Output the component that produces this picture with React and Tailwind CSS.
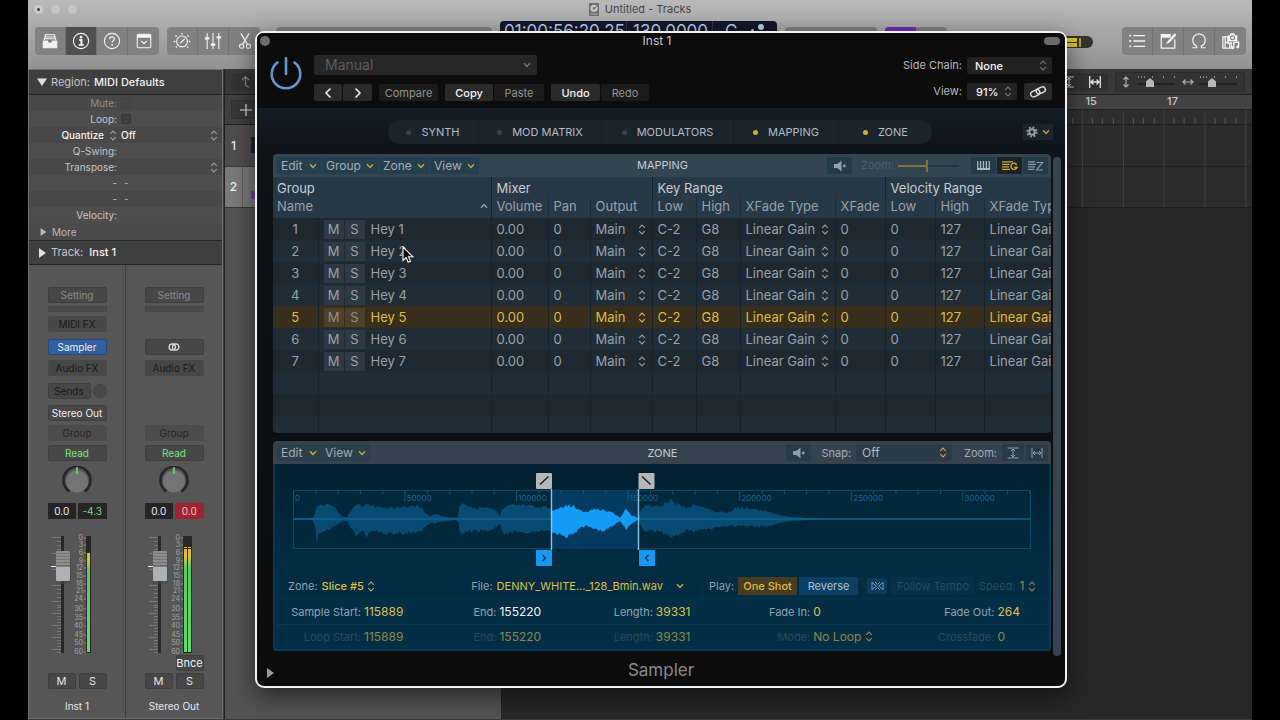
import React from "react";

/* ---------- small icons ---------- */

function UpDown({ className = "" }) {
  return (
    <svg aria-hidden="true" viewBox="0 0 8 12" className={"pointer-events-none w-2 shrink-0 " + className} height="11" fill="none" stroke="currentColor" strokeWidth="1.2">
      <path d="M1 4.2 4 1.2l3 3M1 7.8l3 3 3-3" />
    </svg>
  );
}

function Chevron({ className = "" }) {
  return (
    <svg aria-hidden="true" viewBox="0 0 8 6" className={"pointer-events-none h-1.5 w-2 shrink-0 " + className} fill="none" stroke="currentColor" strokeWidth="1.4">
      <path d="M1 1.2 4 4.4l3-3.2" />
    </svg>
  );
}

function Speaker() {
  return (
    <svg aria-hidden="true" viewBox="0 0 14 12" className="h-3 w-3.5" fill="#93a0ab">
      <path d="M1 4h3.2L8.5.8v10.4L4.200 8H1z" />
      <circle cx="11.300" cy="6" r="1.400" />
    </svg>
  );
}

function Triangle({ down = false, className = "" }) {
  return (
    <svg aria-hidden="true" viewBox="0 0 10 10" className={"size-2.5 shrink-0 " + className} fill="currentColor">
      <path d={down ? "M0 1.500h10L5 9z" : "M2 0l7 5-7 5z"} />
    </svg>
  );
}

/* ---------- main toolbar ---------- */

function ToolButton({ label, active = false, children }) {
  return (
    <button
      type="button"
      aria-label={label}
      className={
        "flex h-7 w-[31px] items-center justify-center border-r border-[#727272] last:border-r-0 " +
        (active ? "bg-[#505050]" : "bg-[#818181]")
      }
    >
      <svg viewBox="0 0 20 20" className="size-[18px]" fill="none" stroke="#f4f4f4" strokeWidth="1.200">
        {children}
      </svg>
    </button>
  );
}

function Toolbar() {
  return (
    <header className="flex h-[69px] flex-col bg-linear-to-b from-[#b9b9b9] to-[#929292]">
      <div className="relative flex h-[18px] items-center justify-center gap-1.5 text-[11px] text-[#484848]">
        <div className="absolute left-[6px] flex gap-[8px]">
          <span className="flex size-[9px] items-center justify-center rounded-full bg-[#cdcdcd]">
            <span className="size-[3px] rounded-full bg-[#3d3d3d]" />
          </span>
          <span className="size-[9px] rounded-full bg-[#c6c6c6]" />
          <span className="size-[9px] rounded-full bg-[#c6c6c6]" />
        </div>
        <svg aria-hidden="true" viewBox="0 0 10 13" className="h-[13px] w-2.5">
          <rect width="10" height="13" rx="1" fill="#6d6d6d" />
          <circle cx="5" cy="5.300" r="3.600" fill="#c9c9c9" />
          <circle cx="5" cy="5.300" r="1.200" fill="#6d6d6d" />
          <path d="M5 5.300 8 3" stroke="#6d6d6d" />
          <path d="M1.500 11h7" stroke="#b5b5b5" />
        </svg>
        <h1>Untitled - Tracks</h1>
      </div>
      <div className="flex items-start pt-[9px] pr-[6px] pl-[7px]">
        <div className="flex overflow-hidden rounded-sm">
          <ToolButton label="Library">
            <path d="M3.500 9 5 3h10l1.500 6M4.500 5.500h11M4 7.500h12" />
            <path d="M2.500 10h4.500c0 3.500 6 3.500 6 0h4.500v7.500h-15z" fill="#f4f4f4" />
          </ToolButton>
          <ToolButton label="Inspector" active>
            <circle cx="10" cy="10" r="8.500" />
            <circle cx="10" cy="5.800" r="1.500" fill="#f4f4f4" stroke="none" />
            <path d="M8 8.800h2.500V14M7.500 14.300h5.500" strokeWidth="2.200" />
          </ToolButton>
          <ToolButton label="Quick Help">
            <circle cx="10" cy="10" r="8.500" />
            <path d="M7.400 8c0-3.600 5.200-3.400 5.200-.3 0 1.900-2.500 2-2.500 4.100" strokeWidth="1.400" />
            <circle cx="10.100" cy="14.400" r="1" fill="#f4f4f4" stroke="none" />
          </ToolButton>
          <ToolButton label="Toolbar">
            <rect x="2.500" y="2.500" width="15" height="15" rx="1.500" />
            <path d="M2.500 4.500h15" strokeWidth="3.500" />
            <path d="m7 10 3 3 3-3" />
          </ToolButton>
        </div>
        <div className="ml-2 flex overflow-hidden rounded-sm">
          <ToolButton label="Smart Controls">
            <circle cx="10" cy="10.500" r="6" />
            <path d="m13 7.500-5 5" />
            <path d="M10 1v1.800M2.800 3.800 4 5M17.200 3.800 16 5M.8 10.500h1.800M17.400 10.500h1.800M3.200 17.200l1-1M16.800 17.200l-1-1" strokeWidth="1.500" />
          </ToolButton>
          <ToolButton label="Mixer">
            <path d="M3.500 1v18M10 1v18M16.500 1v18" />
            <path d="M1 7h5M7.500 14h5M14 6h5" strokeWidth="2.400" />
          </ToolButton>
          <ToolButton label="Editors">
            <path d="M5.500 1.500 12.500 13.500M14.500 1.500 7.500 13.500" strokeWidth="1.500" />
            <circle cx="6.200" cy="15.800" r="2.300" />
            <circle cx="13.800" cy="15.800" r="2.300" />
          </ToolButton>
        </div>
        <div className="ml-4 h-7 flex-1 rounded-sm bg-[#818181]" />
        <div className="ml-2 flex h-9 w-[277px] shrink-0 -translate-y-1.5 rounded-t-sm bg-[#12172a] pl-1 text-[17px] leading-5 text-[#b9cbe6]">
          <span className="w-[123px] border-r border-[#2c3347]">01:00:56:20.25</span>
          <span className="w-[86px] border-r border-[#2c3347] pl-1.5">130.0000</span>
          <span className="flex flex-1 gap-3.5 pl-3">
            C
            <span className="flex items-start gap-1 pt-[3px]">
              <span className="mt-[5px] size-[3px] rounded-full bg-[#b9cbe6]" />
              <span className="size-1.5 rounded-full bg-[#b9cbe6]" />
            </span>
          </span>
        </div>
        <div className="ml-2 h-7 w-[92px] shrink-0 rounded-sm bg-[#818181]" />
        <div className="ml-2 flex h-7 w-[62px] shrink-0 overflow-hidden rounded-sm bg-[#818181]">
          <span className="w-[31px] bg-[#6a2fb8]" />
        </div>
        <div className="mt-[9px] ml-[16px] flex h-3 w-[130px] shrink-0 items-center justify-end rounded-full bg-[#35342c] pr-3">
          <svg aria-hidden="true" viewBox="0 0 110 9" className="h-[9px] w-[110px]">
            <path d="M0 0h106v4H0zM0 5h106v4H0z" fill="#e0c622" />
            <path d="M109 0v9" stroke="#e0c622" strokeWidth="1.500" />
          </svg>
        </div>
        <div className="ml-[29px] flex overflow-hidden rounded-sm">
          <ToolButton label="List Editors">
            <path d="M6 4h13M6 10h13M6 16h13" strokeWidth="1.400" />
            <path d="M1.500 4h2M1.500 10h2M1.500 16h2" strokeWidth="2" />
          </ToolButton>
          <ToolButton label="Notes">
            <path d="M17.500 8v10h-15V3h10.500" strokeWidth="1.400" />
            <path d="M2.500 4.500h10.500" strokeWidth="3.500" />
            <path d="M17.500 1.800 10 10l-1.500 3L11.500 11.500 19 3.500z" fill="#f4f4f4" strokeWidth=".6" />
          </ToolButton>
          <ToolButton label="Apple Loops">
            <path d="M2.500 17.500h5v-1.800a7 7 0 1 1 5 0v1.800h5" strokeWidth="1.300" />
          </ToolButton>
          <ToolButton label="Browsers">
            <path d="M6.500 3.500h2L9.500 1.500h4l1 2h2.500v7h-10.500z" fill="#f4f4f4" stroke="none" />
            <circle cx="11.700" cy="6.500" r="2.200" stroke="#818181" />
            <path d="M1 5.500v12.500h9.500v-5.500h-4v-7zM3.500 5.500v12.500M8.500 12.500v5.500M3.500 11.500h3" strokeWidth="1.400" />
            <path d="M13 17.500v-5.500l5.500-1V16" strokeWidth="1.400" />
            <circle cx="12" cy="17.500" r="1.700" fill="#f4f4f4" stroke="none" />
            <circle cx="17.500" cy="16.500" r="1.700" fill="#f4f4f4" stroke="none" />
          </ToolButton>
        </div>
      </div>
    </header>
  );
}

/* ---------- inspector ---------- */

function RegionRow({ label, tone = "text-[#c4c4c4]", children }) {
  return (
    <div className="flex h-4 items-center odd:bg-[#484848] even:bg-[#4d4d4d]">
      <span className={"w-[88px] shrink-0 text-right " + tone}>{label}</span>
      <span className="flex flex-1 items-center justify-between pr-1 pl-1">{children}</span>
    </div>
  );
}

const SCALE = [
  [0, 3], [3, 10], [6, 18], [9, 26], [12, 33], [15, 41], [18, 49], [21, 56],
  [24, 64], [30, 74], [35, 83], [40, 91], [45, 100], [50, 108], [60, 117],
];

function Fader({ stereo = false, name }) {
  const gradient = stereo ? "level-stereo" : "level-mono";
  const ticks = [];
  for (let i = 0; i < 34; i++) ticks.push(i < 18 ? 2 + i * 4 : 72 + (i - 18) * 3);
  return (
    <div className="relative h-[120px] w-[59px]">
      <svg aria-hidden="true" viewBox="0 0 59 120" className="h-[120px] w-[59px] overflow-visible">
        <path
          d={ticks.filter((y) => y < 118).map((y, i) => `M${i % 4 === 0 ? 4 : 9} ${y}.5H14`).join("")}
          stroke="#858585"
          strokeWidth=".7"
        />
        <path d="M3 31.500h8" stroke="#ececec" />
        <rect x="13" y="1" width="3" height="117" fill="#282828" />
        <rect x="8" y="17" width="15" height="32" rx="1" fill="#474747" opacity=".6" />
        <rect x="8" y="16" width="14" height="15" rx="1" fill="#8d8d8d" />
        <rect x="8" y="31" width="14" height="15" rx="1" fill="#b0b1b5" />
        <path d="M8 18.500h14M8 21.500h14M8 24.500h14M8 27.500h14" stroke="#747474" />
        <path d="M8 31h14" stroke="#4b4b4b" />
        <g fill="#a3a3a3" fontSize="7" fontFamily="Inter, sans-serif" textAnchor="end">
          {SCALE.map(([n, y]) => (
            <text key={n} x="35" y={y + 2}>{n}</text>
          ))}
        </g>
        <path d={SCALE.map(([, y]) => `M36 ${y}h2`).join("")} stroke="#a3a3a3" strokeWidth=".8" />
        <defs>
          <linearGradient id={gradient} x1="0" x2="0" y1="0" y2="1">
            <stop offset="0" stopColor="#e5b92c" />
            <stop offset=".08" stopColor="#dcc234" />
            <stop offset=".18" stopColor="#5ccb5f" />
            <stop offset="1" stopColor="#5ddc6c" />
          </linearGradient>
        </defs>
        {stereo ? (
          <>
            <rect x="38" y="1" width="9" height="117" fill="#272727" />
            <rect x="39" y="14" width="3" height="103" fill={`url(#${gradient})`} />
            <rect x="43" y="14" width="3" height="103" fill={`url(#${gradient})`} />
            <path d="M39 12.500h3M43 12.500h3" stroke="#e0bb30" />
          </>
        ) : (
          <>
            <rect x="38" y="1" width="5" height="117" fill="#272727" />
            <rect x="39" y="18" width="3" height="99" fill={`url(#${gradient})`} />
          </>
        )}
      </svg>
      <input
        type="range"
        aria-label={name + " volume"}
        min="-60"
        max="6"
        defaultValue="0"
        className="absolute top-0 left-0 h-[120px] w-6 opacity-0 [direction:rtl] [writing-mode:vertical-lr]"
      />
    </div>
  );
}

function Slot({
  children,
  label,
  width = "w-[59px]",
  skin = "border-[#3f3f3f] bg-[#474747]",
  tone = "text-[#191919]",
  className = "",
}) {
  return (
    <button
      type="button"
      aria-label={label}
      className={["flex h-4 shrink-0 items-center justify-center rounded-xs border text-[10px] leading-3", width, skin, tone, className].join(" ")}
    >
      {children}
    </button>
  );
}

function Knob() {
  return (
    <svg aria-hidden="true" viewBox="0 0 30 30" className="mt-[5px] size-[30px]">
      <circle cx="15" cy="15.500" r="11" fill="#747474" />
      <path d="M7.500 25.500a13.500 13.500 0 1 1 15 0" fill="none" stroke="#262626" strokeWidth="2.600" />
      <path d="M15 1v7" stroke="#67d86f" strokeWidth="1.600" />
    </svg>
  );
}

function Strip({ name, master = false }) {
  return (
    <section aria-label={name} className={"flex flex-1 flex-col items-center pt-[22px] pb-1 " + (master ? "" : "border-r border-[#3f3f3f]")}>
      <Slot tone="text-[#898989]">Setting</Slot>
      <span className="mt-[3px] h-1.5 w-[59px] border border-[#484848] bg-[#4b4b4b]" />
      {master ? <span className="mt-1 h-4" /> : <Slot className="mt-1" skin="border-[#494949] bg-[#474747]">MIDI FX</Slot>}
      {master ? (
        <Slot className="mt-[7px]" label="Stereo input">
          <svg viewBox="0 0 12 8" className="h-2 w-3" fill="none" stroke="#e6e6e6" strokeWidth="1.200">
            <circle cx="4.300" cy="4" r="3.200" />
            <circle cx="7.700" cy="4" r="3.200" />
          </svg>
        </Slot>
      ) : (
        <Slot className="mt-[7px]" skin="border-[#24497e] bg-[#315f9f]" tone="text-[#eef3fa]">Sampler</Slot>
      )}
      <Slot className="mt-[5px]" skin="border-[#494949] bg-[#474747]">Audio FX</Slot>
      {master ? (
        <span className="mt-[7px] h-[38px]" />
      ) : (
        <>
          <div className="mt-[7px] flex h-4 w-[59px] items-center justify-between">
            <Slot width="w-[43px]">Sends</Slot>
            <button type="button" aria-label="Send level" className="size-[14px] rounded-full border border-[#434343] bg-[#484848]" />
          </div>
          <Slot className="mt-1.5" tone="text-[#f0f0f0]">Stereo Out</Slot>
        </>
      )}
      <Slot className="mt-1" skin="border-[#4b4b4b] bg-[#4c4c4c]" tone="text-[#252525]">Group</Slot>
      <Slot className="mt-1" tone="text-[#79e283]">Read</Slot>
      <Knob />
      <div className="mt-[7px] flex h-4 w-[59px] gap-0.5 text-center text-[10px] leading-4">
        <output className="flex-1 bg-[#252525] text-[#ededed]">0.0</output>
        <output className={"flex-1 " + (master ? "bg-[#9d2430] text-[#f3c4c7]" : "bg-[#252525] text-[#6fd57a]")}>{master ? "0.0" : "-4.3"}</output>
      </div>
      <div className="mt-4">
        <Fader name={name} stereo={master} />
      </div>
      <div className="flex h-4 w-[59px] justify-end">
        {master && <Slot width="w-7" tone="text-[#f0f0f0]"><span className="text-[11px]">Bnce</span></Slot>}
      </div>
      <div className="mt-0.5 flex w-[59px] justify-between">
        <Slot width="w-7" tone="text-[#e6e6e6]"><span className="text-[11px]">M</span></Slot>
        <Slot width="w-7" tone="text-[#e6e6e6]"><span className="text-[11px]">S</span></Slot>
      </div>
      <p className="mt-[9px] text-[10px] leading-4 text-[#e8e8e8]">{name}</p>
    </section>
  );
}

function Inspector() {
  return (
    <aside className="flex w-[195px] shrink-0 flex-col border border-[#707070] bg-[#565656]">
      <h2 className="flex h-[25px] items-center gap-1 border-b border-[#262626] bg-[#3f3f3f] px-[8px] text-[11px] text-[#c6c6c6]">
        <Triangle down className="text-[#e0e0e0]" />
        Region: <span className="font-medium text-[#f2f2f2]">MIDI Defaults</span>
      </h2>
      <div className="text-[10px] leading-4">
        <RegionRow label={<label htmlFor="mute">Mute:</label>} tone="text-[#8a8a8a]">
          <input id="mute" type="checkbox" className="size-2.5 appearance-none rounded-xs border border-[#424242] bg-[#474747]" />
        </RegionRow>
        <RegionRow label={<label htmlFor="loop">Loop:</label>}>
          <input id="loop" type="checkbox" className="size-2.5 appearance-none rounded-xs border border-[#353535] bg-[#404040]" />
        </RegionRow>
        <div className="flex h-4 items-center bg-[#484848] text-[#f2f2f2]">
          <label htmlFor="quantize" className="w-[75px] text-right font-medium">Quantize</label>
          <UpDown className="mr-1 ml-[5px] text-[#9c9c9c]" />
          <select id="quantize" className="flex-1 appearance-none bg-transparent font-medium outline-none">
            <option>Off</option>
          </select>
          <UpDown className="mr-1 text-[#9c9c9c]" />
        </div>
        <RegionRow label="Q-Swing:" />
        <RegionRow label="Transpose:">
          <span />
          <UpDown className="text-[#9c9c9c]" />
        </RegionRow>
        <RegionRow label="-">
          <span className="pl-[3px] text-[#b0b0b0]">-</span>
        </RegionRow>
        <RegionRow label="-">
          <span className="pl-[3px] text-[#b0b0b0]">-</span>
        </RegionRow>
        <RegionRow label="Velocity:" />
        <button type="button" className="flex h-[17px] w-full items-center gap-1 bg-[#4a4a4a] pl-[9px] text-[#b9b9b9]">
          <Triangle className="h-2" /> More
        </button>
      </div>
      <h2 className="flex h-[25px] items-center gap-1 border-y border-[#262626] bg-[#3f3f3f] px-[8px] text-[11px] text-[#c6c6c6]">
        <Triangle className="text-[#e0e0e0]" />
        Track: <span className="pl-0.5 font-medium text-[#f2f2f2]">Inst 1</span>
      </h2>
      <div className="flex flex-1">
        <Strip name="Inst 1" />
        <Strip name="Stereo Out" master />
      </div>
    </aside>
  );
}

/* ---------- tracks area ---------- */

function MiniZoom({ vertical = false }) {
  return (
    <span className="flex h-[18px] w-[62px] items-center justify-between">
      <svg aria-hidden="true" viewBox="0 0 12 12" className={"size-3 " + (vertical ? "rotate-90" : "")} fill="none" stroke="#b4b4b4" strokeWidth="1.100">
        <path d="M1 6h10M3.500 3.500 1 6l2.500 2.500M8.500 3.500 11 6 8.500 8.500" />
      </svg>
      <svg aria-hidden="true" viewBox="0 0 40 14" className="mr-1.5 h-3.5 w-10">
        <rect x="1" y="8" width="38" height="2" fill="#222" />
        <path d="M2.500 1v2M5.500 1v2M8.500 1v2M16.500 1v2M27.500 1v2M38.500 1v2" stroke="#8a8a8a" />
        <path d="M10 6.500 14 3l4 3.500V12h-8z" fill="#b9b9b9" />
      </svg>
    </span>
  );
}

function TracksArea() {
  const bars = [13, 15, 17, 19].map((n) => ({ n, x: 8.5 + ((n - 1) / 2) * 81.7 }));
  return (
    <main className="flex min-w-0 flex-1 flex-col border-l border-[#222] bg-[#272727]">
      <div className="flex h-[26px] items-center justify-between border-b border-[#222] bg-[#393939] pr-[7px] pl-[6px]">
        <button type="button" aria-label="Hierarchy up" className="flex h-[18px] w-8 items-center justify-center rounded-xs bg-[#333]">
          <svg viewBox="0 0 12 14" className="h-3.5 w-3" fill="none" stroke="#858585" strokeWidth="1.200">
            <path d="M1 5l3.500-3.500L8 5M4.500 2v7c0 2 1.500 3 4 3" />
          </svg>
        </button>
        <div className="flex h-[18px] items-center gap-[7px]">
          <div className="flex">
            <button type="button" aria-label="Fit vertically" className="flex h-[18px] w-[26px] items-center justify-center rounded-l-xs bg-[#303030]">
              <svg viewBox="0 0 12 12" className="size-3" fill="none" stroke="#d0d0d0"><path d="M1 1h10M1 11h10M6 2v8M4 4l2-2 2 2M4 8l2 2 2-2" /></svg>
            </button>
            <button type="button" aria-label="Fit horizontally" className="flex h-[18px] w-[26px] items-center justify-center rounded-r-xs bg-[#303030]">
              <svg viewBox="0 0 12 12" className="size-3" fill="none" stroke="#e4e4e4" strokeWidth="1.300"><path d="M.7 0v12M11.300 0v12M2 6h8M4.500 3.500 2 6l2.500 2.500M7.500 3.500 10 6 7.500 8.500" /></svg>
            </button>
          </div>
          <div className="flex rounded-xs border border-[#2b2b2b] bg-[#333] pl-1">
            <MiniZoom vertical />
            <MiniZoom />
          </div>
        </div>
      </div>
      <div className="flex flex-1">
        <div className="flex w-[277px] shrink-0 flex-col border-r border-[#222] bg-[#535353] text-[12px] font-medium text-[#ededed]">
          <div className="flex h-[30px] items-center border-b border-[#222] bg-[#404040] pl-[6px]">
            <button type="button" aria-label="Add track" className="flex h-[19px] w-8 items-center justify-start rounded-xs border border-[#333] bg-[#383838] pl-2">
              <svg viewBox="0 0 12 12" className="size-3" stroke="#e4e4e4" strokeWidth="1.200"><path d="M6 0v12M0 6h12" /></svg>
            </button>
          </div>
          <div className="flex h-[42px] items-stretch border-b border-[#3a3a3a] bg-[#4e4e4e]">
            <span className="flex w-[18px] items-center justify-center border-r border-[#5e4c50]">1</span>
            <span className="mt-3 ml-2 h-4 w-8 bg-[#1d2230]" />
          </div>
          <div className="flex h-[41px] items-stretch border-b border-[#3a3a3a] bg-[#7a7a7a]">
            <span className="flex w-[18px] items-center justify-center border-r border-[#5b5b5b]">2</span>
            <span className="mt-6 ml-2 h-2 w-8 bg-[#6a3fc4]" />
          </div>
        </div>
        <svg aria-hidden="true" className="h-auto min-w-0 flex-1 overflow-hidden">
          <rect width="100%" height="14" fill="#424242" />
          <rect y="14" width="100%" height="16" fill="#2e2e2e" />
          <rect y="30" width="100%" height="83" fill="#2b2b2b" />
          <path d="M0 29.500H1200M0 71.500H1200M0 112.500H1200" stroke="#1e1e1e" />
          <path d="M0 14.500H1200" stroke="#242424" />
          {bars.map(({ n, x }) => (
            <g key={n}>
              <path d={`M${x} 3V112M${x + 41} 17V112`} stroke="#414141" />
              <path d={`M${x + 10} 23v6M${x + 20} 23v6M${x + 31} 23v6M${x + 51} 23v6M${x + 61} 23v6M${x + 72} 23v6`} stroke="#555" />
              {(n === 15 || n === 17) && (
                <text x={x + 3} y="10" fontSize="11" fontWeight="500" fontFamily="Inter, sans-serif" fill="#c9c9c9">{n}</text>
              )}
            </g>
          ))}
        </svg>
      </div>
    </main>
  );
}

/* ---------- plug-in window header ---------- */

function HeadButton({ children, on = false, label, className = "" }) {
  return (
    <button
      type="button"
      aria-label={label}
      className={"flex h-[17px] items-center justify-center rounded-xs text-[11px] leading-4 " + (on ? "bg-[#2a2a2a] font-medium text-[#f4f4f4] " : "bg-[#1b1b1b] text-[#939393] ") + className}
    >
      {children}
    </button>
  );
}

function WindowHeader() {
  return (
    <header className="rounded-t-md bg-[#0c0c0c] text-[11px] leading-4">
      <div className="flex h-4 items-center justify-between pr-[5px] pl-[3px]">
        <button type="button" aria-label="Close" className="size-2.5 rounded-full bg-[#6b6b6b]" />
        <h2 className="text-[12px] text-[#c7c7c7]">Inst 1</h2>
        <button type="button" aria-label="Hide header" className="h-2 w-4 rounded-full bg-[#6a6a6a]" />
      </div>
      <div className="flex items-start pr-[13px] pb-[7px] pl-3">
        <button type="button" aria-label="Power" className="mt-[7px] mr-[11px]">
          <svg viewBox="0 0 34 34" className="size-[34px]" fill="none" stroke="#6496cf" strokeWidth="2.600" strokeLinecap="round">
            <path d="M17 2v16M8.500 6.500a14.300 14.300 0 1 0 17 0" />
          </svg>
        </button>
        <div className="flex flex-1 flex-col gap-[9px] pt-[6px]">
          <div className="relative h-5 w-[223px]">
            <select aria-label="Preset" className="h-5 w-full appearance-none rounded-xs bg-[#262626] pl-[11px] text-[14px] text-[#5c5c5c] outline-none">
              <option>Manual</option>
            </select>
            <Chevron className="absolute top-[7px] right-1.5 text-[#757575]" />
          </div>
          <div className="flex gap-[7px]">
            <div className="flex gap-px">
              <HeadButton label="Previous preset" on className="w-7">
                <svg viewBox="0 0 8 12" className="h-3 w-2" fill="none" stroke="currentColor" strokeWidth="1.500"><path d="M6.500 1.500 2 6l4.500 4.500" /></svg>
              </HeadButton>
              <HeadButton label="Next preset" on className="w-[29px]">
                <svg viewBox="0 0 8 12" className="h-3 w-2" fill="none" stroke="currentColor" strokeWidth="1.500"><path d="M1.500 1.500 6 6l-4.500 4.500" /></svg>
              </HeadButton>
            </div>
            <HeadButton className="w-[59px]">Compare</HeadButton>
            <div className="flex gap-px">
              <HeadButton on className="w-12">Copy</HeadButton>
              <HeadButton className="w-[50px]">Paste</HeadButton>
            </div>
            <div className="flex gap-px">
              <HeadButton on className="w-[49px]">Undo</HeadButton>
              <HeadButton className="w-12">Redo</HeadButton>
            </div>
          </div>
        </div>
        <div className="grid grid-cols-[auto_85px] gap-x-[5px] gap-y-[9px] pt-2 text-right text-[#b9b9b9]">
          <label htmlFor="sidechain">Side Chain:</label>
          <div className="relative h-[17px]">
            <select id="sidechain" className="h-[17px] w-full appearance-none rounded-xs bg-[#222] pl-2 font-medium text-[#f2f2f2] outline-none">
              <option>None</option>
            </select>
            <UpDown className="absolute top-[3px] right-[5px] text-[#757575]" />
          </div>
          <label htmlFor="view-size">View:</label>
          <div className="flex justify-between">
            <div className="relative h-[17px] w-[50px]">
              <select id="view-size" className="h-[17px] w-full appearance-none rounded-xs bg-[#222] pl-[9px] font-medium text-[#f2f2f2] outline-none">
                <option>91%</option>
              </select>
              <UpDown className="absolute top-[3px] right-[5px] text-[#757575]" />
            </div>
            <HeadButton label="Link" on className="w-7">
              <svg viewBox="0 0 18 14" className="h-3.5 w-[18px]" fill="none" stroke="#e2e2e2" strokeWidth="1.400">
                <rect x="1.500" y="5.500" width="9.500" height="5.600" rx="2.800" transform="rotate(-24 6.200 8.300)" />
                <rect x="7" y="2.600" width="9.500" height="5.600" rx="2.800" transform="rotate(-24 11.700 5.400)" />
              </svg>
            </HeadButton>
          </div>
        </div>
      </div>
    </header>
  );
}

const TABS = [
  ["SYNTH", false, "w-[91px]"],
  ["MOD MATRIX", false, "w-[123px]"],
  ["MODULATORS", false, "w-[132px]"],
  ["MAPPING", true, "w-[105px]"],
  ["ZONE", true, "w-[93px]"],
];

function Tabs() {
  return (
    <div className="flex items-center justify-between pt-3 pr-2 pb-2.5">
      <span className="w-6" />
      <nav className="flex overflow-hidden rounded-full bg-[#1a242d]">
        {TABS.map(([name, on, width]) => (
          <button
            key={name}
            type="button"
            className={"flex h-6 items-center justify-center gap-2.5 border-r border-[#141d25] text-[11px] text-[#b4bbc1] last:border-r-0 " + width}
          >
            <span className={"size-[5px] rounded-full " + (on ? "bg-[#d3ac2f]" : "bg-[#39434b]")} />
            {name}
          </button>
        ))}
      </nav>
      <button type="button" aria-label="Settings" className="flex h-4 w-[30px] items-center justify-center gap-1 bg-[#1b252e]">
        <svg viewBox="0 0 12 12" className="size-3" fill="none" stroke="#9aa0a6">
          <circle cx="6" cy="6" r="2.800" strokeWidth="2" />
          <circle cx="6" cy="6" r="4.700" strokeWidth="1.800" strokeDasharray="1.850 1.841" />
        </svg>
        <Chevron className="text-[#c8a534]" />
      </button>
    </div>
  );
}

/* ---------- mapping panel ---------- */

function Menu({ children, className = "" }) {
  return (
    <button type="button" className={"flex items-center justify-between border-r border-[#2e4553] px-1 last:border-r-0 " + className}>
      {children}
      <Chevron className="text-[#c9ab3a]" />
    </button>
  );
}

function MappingHeader() {
  return (
    <div className="grid h-[23px] grid-cols-[1fr_auto_1fr] items-center rounded-t-sm bg-[#344552] pr-[3px] pl-[4px] text-[12px] text-[#a3adb6]">
      <div className="flex h-[17px] justify-self-start bg-[#253f4e]">
        <Menu className="w-[45px]">Edit</Menu>
        <Menu className="w-[57px]">Group</Menu>
        <Menu className="w-[51px]">Zone</Menu>
        <Menu className="w-[49px]">View</Menu>
      </div>
      <h3 className="text-[11px] text-[#c4cbd1]">MAPPING</h3>
      <div className="flex h-[17px] items-center justify-self-end">
        <button type="button" aria-label="Preview" className="flex h-[17px] w-[25px] items-center justify-center bg-[#233b49]"><Speaker /></button>
        <label htmlFor="map-zoom" className="pl-[9px] text-[11px] text-[#4d5c67]">Zoom:</label>
        <input
          id="map-zoom"
          type="range"
          defaultValue="48"
          className="ml-1 h-3 w-[61px] appearance-none bg-[linear-gradient(to_right,#7d7340_48%,#263540_48%)] bg-[length:100%_2px] bg-center bg-no-repeat [&::-webkit-slider-thumb]:h-3 [&::-webkit-slider-thumb]:w-0.5 [&::-webkit-slider-thumb]:appearance-none [&::-webkit-slider-thumb]:bg-[#7d7340]"
        />
        <div className="ml-3 flex gap-px">
          <button type="button" aria-label="Keyboard view" className="flex h-[17px] w-[25px] items-center justify-center bg-[#233b49]">
            <svg viewBox="0 0 13 9" className="h-[9px] w-[13px]" stroke="#aab3ba"><path d="M0 8h13" strokeWidth="2" /><path d="M.7 0v8M3.600 0v8M6.500 0v8M9.400 0v8M12.300 0v8" strokeWidth="1.300" /></svg>
          </button>
          <button type="button" aria-label="Group view" className="flex h-[17px] w-[25px] items-center justify-center bg-[#1b2228]">
            <svg viewBox="0 0 16 10" className="h-2.5 w-4" fill="none" stroke="#d1a92c" strokeWidth="1.200"><path d="M0 .8h11M0 3.300h7.500M0 5.800h7M0 8.300h8" /><path d="M14.800 3.800A3.100 3.100 0 1 0 15 6.300H12.300" strokeWidth="1.400" /></svg>
          </button>
          <button type="button" aria-label="Zone view" className="flex h-[17px] w-[25px] items-center justify-center bg-[#233b49]">
            <svg viewBox="0 0 16 10" className="h-2.5 w-4" fill="none" stroke="#8b9aa4" strokeWidth="1.200"><path d="M0 .8h7M0 3.300h8M0 5.800h7M0 8.300h6" /><path d="M8.500 1.500h6L8.500 9H15" /></svg>
          </button>
        </div>
      </div>
    </div>
  );
}

const WIDTHS = ["w-[45px]", "w-[173px]", "w-[57px]", "w-[42px]", "w-[62px]", "w-11", "w-11", "w-[95px]", "w-[50px]", "w-[50px]", "w-[49px]", ""];

function SelectCell({ value, name }) {
  return (
    <div className="relative flex items-center">
      <select aria-label={name} className="w-full appearance-none bg-transparent outline-none">
        <option>{value}</option>
      </select>
      <UpDown className="absolute right-1.5" />
    </div>
  );
}

function MappingTable() {
  const cell = "border-r border-[#17222a] pl-[5px] last:border-r-0";
  const sub = "border-r border-[#1d2c37] pl-[5px] text-left align-top font-normal last:border-r-0";
  return (
    <div className="overflow-hidden">
      <table className="w-full table-fixed border-collapse text-[13px] leading-4 whitespace-nowrap text-[#98a1a9]">
        <colgroup>
          {WIDTHS.map((w, i) => <col key={i} className={w} />)}
        </colgroup>
        <thead className="bg-[#273847]">
          <tr className="h-[21px] text-left text-[#c6ccd2] [&>th]:font-normal">
            <th colSpan={2} className="border-r border-[#17222a] pl-1">Group</th>
            <th colSpan={3} className="border-r border-[#17222a] pl-[5px]">Mixer</th>
            <th colSpan={4} className="border-r border-[#17222a] pl-[5px]">Key Range</th>
            <th colSpan={3} className="pl-[5px]">Velocity Range</th>
          </tr>
          <tr className="h-5 border-b border-[#1a2730]">
            <th colSpan={2} className="border-r border-[#17222a] pr-[3px] pl-1 align-top font-normal" aria-sort="ascending">
              <span className="flex items-center justify-between">
                Name
                <Chevron className="rotate-180" />
              </span>
            </th>
            <th className={sub}>Volume</th>
            <th className={sub}>Pan</th>
            <th className={sub}>Output</th>
            <th className={sub}>Low</th>
            <th className={sub}>High</th>
            <th className={sub}>XFade Type</th>
            <th className={sub}>XFade</th>
            <th className={sub}>Low</th>
            <th className={sub}>High</th>
            <th className={sub + " overflow-hidden"}>XFade Type</th>
          </tr>
        </thead>
        <tbody>
          {[1, 2, 3, 4, 5, 6, 7].map((n) => (
            <tr key={n} className={n === 5 ? "h-[22px] bg-[#372e1c] text-[#dcbd42]" : "h-[22px] odd:bg-[#1e2831] even:bg-[#202d36]"}>
              <td className="border-r border-[#17222a] text-center">{n}</td>
              <td className={cell}>
                <div className="flex items-center gap-px">
                  <button type="button" aria-label={"Mute group " + n} className={"h-[19px] w-5 " + (n === 5 ? "bg-[#4b402c] text-[#998f78]" : "bg-[#2f3945]")}>M</button>
                  <button type="button" aria-label={"Solo group " + n} className={"h-[19px] w-5 " + (n === 5 ? "bg-[#4b402c] text-[#998f78]" : "bg-[#2f3945]")}>S</button>
                  <span className="pl-[5px]">Hey {n}</span>
                </div>
              </td>
              <td className={cell}>0.00</td>
              <td className={cell}>0</td>
              <td className={cell}><SelectCell value="Main" name={"Output of group " + n} /></td>
              <td className={cell}>C-2</td>
              <td className={cell}>G8</td>
              <td className={cell}><SelectCell value="Linear Gain" name={"Key crossfade of group " + n} /></td>
              <td className={cell}>0</td>
              <td className={cell}>0</td>
              <td className={cell}>127</td>
              <td className={cell + " overflow-hidden"}>Linear Gain</td>
            </tr>
          ))}
          {["h-[22px]", "h-[22px]", "h-[17px]"].map((h, i) => (
            <tr key={i} className={h + " odd:bg-[#1e2831] even:bg-[#202d36]"}>
              {WIDTHS.map((_, c) => <td key={c} className={cell} />)}
            </tr>
          ))}
        </tbody>
      </table>
    </div>
  );
}

/* ---------- zone panel ---------- */

// Envelope samples: x, top, bottom, in the units of the wave drawing.
const BEFORE = [
  [0, 46.3, 47.7], [20, 45.7, 48.3], [22, 43, 53], [23, 36, 58], [24, 32, 71], [26, 33, 60], [33, 33, 58], [38, 32, 57],
  [43, 37, 53], [47, 42, 51], [50, 45, 49], [54, 45, 49], [57, 40, 54], [60, 35, 58], [63, 31, 66], [67, 33, 61],
  [70, 35, 58], [73, 30, 67], [75, 33, 61], [83, 35, 60], [100, 35, 62], [117, 34, 61], [128, 35, 60], [131, 40, 55],
  [137, 44, 51], [143, 42, 51], [153, 45, 49], [163, 46, 48], [165, 45, 49], [167, 30, 63], [173, 34, 60],
  [183, 36, 59], [197, 36, 58], [203, 38, 55], [207, 45, 51], [209, 36, 61], [213, 35, 62], [219, 30, 60],
  [227, 34, 59], [233, 32, 61], [243, 35, 60], [258, 36, 58],
];
const SELECTED = [
  [258, 37, 60], [263, 38, 62], [273, 34, 64], [280, 34, 63], [287, 38, 56], [293, 40, 54], [300, 37, 57],
  [310, 38, 59], [320, 41, 54], [327, 46, 49], [333, 37, 57], [338, 43, 52], [345, 46, 48],
];
const AFTER = [
  [346, 45, 49], [348, 38, 54], [352, 33, 60], [358, 35, 59], [368, 33, 60], [379, 29, 64], [387, 32, 63],
  [394, 37, 58], [400, 33, 59], [414, 37, 57], [424, 40, 55], [437, 40, 54], [442, 35, 54], [451, 36, 54],
  [467, 38, 55], [480, 41, 53], [490, 44, 50], [500, 45, 49], [517, 46, 48], [540, 46.500, 47.500], [738, 46.700, 47.300],
];

function wavePath(points) {
  const at = (x, k) => {
    const i = Math.max(1, points.findIndex((p) => p[0] >= x));
    const [a, b] = [points[i - 1], points[i]];
    return a[k] + ((b[k] - a[k]) * (x - a[0])) / (b[0] - a[0] || 1);
  };
  const noise = (x, s) => Math.abs(Math.sin(x * 12.9898 + s) * 43758.5453) % 1;
  const [first, last] = [points[0][0], points[points.length - 1][0]];
  const top = [];
  const bottom = [];
  for (let x = first; x <= last; x += 1.5) {
    const t = at(x, 1);
    const b = at(x, 2);
    const spread = (b - t) * 0.14;
    top.push(`${x} ${(t + (noise(x, 1) - 0.5) * spread).toFixed(1)}`);
    bottom.unshift(`${x} ${(b - (noise(x, 2) - 0.5) * spread).toFixed(1)}`);
  }
  return "M" + top.concat(bottom).join("L") + "Z";
}

function Waveform() {
  const ticks = Array.from({ length: 34 }, (_, i) => i);
  return (
    <svg role="img" aria-label="Sample waveform" viewBox="0 0 738 96" className="block w-full">
      <rect x=".5" y="18.500" width="737" height="58" fill="#01273b" stroke="#0c4a67" />
      <rect x="258" y="18.500" width="87.500" height="58.500" fill="#053a60" />
      <path d={wavePath(BEFORE)} fill="#074b72" />
      <path d={wavePath(AFTER)} fill="#074b72" />
      <path d="M1 47H737" stroke="#10709f" />
      <path d={wavePath(SELECTED)} fill="#129cf6" />
      <path d={ticks.map((i) => `M${(i * 22.31 + 0.5).toFixed(1)} 19v${i % 5 ? 3 : 10}`).join("")} stroke="#11587c" />
      <g fill="#166590" fontSize="8" fontFamily="Inter, sans-serif">
        {["0", "50000", "100000", "150000", "200000", "250000", "300000"].map((t, i) => (
          <text key={t} x={i * 111.6 + 2} y="29">{t}</text>
        ))}
      </g>
      <path d="M258.500 17V78M345.500 17V78" stroke="#8ec3e6" strokeWidth="1.400" />
      <rect x="243" y="1" width="16" height="16" rx="1" fill="#b5b6b8" />
      <path d="m247 12.500 8.500-8" stroke="#1d1d1d" strokeWidth="1.400" />
      <rect x="345.500" y="1" width="16" height="16" rx="1" fill="#b5b6b8" />
      <path d="m349 4.500 8.500 8" stroke="#1d1d1d" strokeWidth="1.400" />
      <rect x="243" y="78" width="16" height="16" rx="1" fill="#1599f2" />
      <path d="m249.500 83 3 3-3 3" fill="none" stroke="#06385c" strokeWidth="1.500" />
      <rect x="346" y="78" width="16" height="16" rx="1" fill="#1599f2" />
      <path d="m355.500 83-3 3 3 3" fill="none" stroke="#06385c" strokeWidth="1.500" />
    </svg>
  );
}

function Field({ label, value, white = false, picker = false, dim = false }) {
  const tone = dim ? "text-[#8c8748]" : white ? "text-[#f2f5f7]" : "text-[#dac04c]";
  return (
    <div className="flex gap-[3px]">
      <span className={"w-[84px] text-right " + (dim ? "text-[#27485c]" : "")}>{label}</span>
      <span className={"flex items-center gap-1 text-[12px] " + tone}>
        {value}
        {picker && <UpDown />}
      </span>
    </div>
  );
}

const FIELD_GRID = "grid h-6 grid-cols-[136fr_157fr_158fr_185fr_137fr] items-center";

function ZonePanel() {
  return (
    <section aria-label="Zone" className="mt-2 overflow-hidden rounded-sm text-[11px] leading-4 text-[#8ea3b1]">
      <div className="grid h-[23px] grid-cols-[1fr_auto_1fr] items-center bg-[#36434f] pr-[3px] pl-[4px] text-[#a3adb6]">
        <div className="flex h-[17px] justify-self-start bg-[#2b3f4a] text-[12px]">
          <Menu className="w-11 border-r-0">Edit</Menu>
          <Menu className="w-[49px]">View</Menu>
        </div>
        <h3 className="text-[#c4cbd1]">ZONE</h3>
        <div className="flex h-[17px] items-center justify-self-end">
          <button type="button" aria-label="Preview zone" className="flex h-[17px] w-[25px] items-center justify-center bg-[#2a3a46]"><Speaker /></button>
          <label htmlFor="snap" className="pr-[5px] pl-2.5">Snap:</label>
          <div className="relative flex h-[17px] w-24 items-center">
            <select id="snap" className="h-[17px] w-full appearance-none bg-[#2a3a46] pl-1.5 text-[12px] text-[#b4bcc3] outline-none">
              <option>Off</option>
            </select>
            <UpDown className="absolute right-[5px] text-[#c9ab3a]" />
          </div>
          <span className="pr-[5px] pl-3">Zoom:</span>
          <div className="flex gap-0.5">
            <button type="button" aria-label="Zoom vertically" className="flex h-[17px] w-[22px] items-center justify-center bg-[#2a3a46]">
              <svg viewBox="0 0 12 12" className="size-3" fill="none" stroke="#929da6"><path d="M.5 1h11M.5 11h11M6 2v8M4 4l2-2 2 2M4 8l2 2 2-2" /></svg>
            </button>
            <button type="button" aria-label="Zoom horizontally" className="flex h-[17px] w-[22px] items-center justify-center bg-[#2a3a46]">
              <svg viewBox="0 0 12 12" className="size-3" fill="none" stroke="#929da6"><path d="M1 1v10M11 1v10M2 6h8M4 4 2 6l2 2M8 4l2 2-2 2" /></svg>
            </button>
          </div>
        </div>
      </div>
      <div className="border-x-2 border-b-2 border-[#073a56] bg-linear-to-b from-[#012030] to-[#03374f]">
        <div className="pt-2 pr-[18px] pl-[18px]">
          <Waveform />
        </div>
        <div className="mt-[7px] flex gap-[3px] px-0.5">
          <div className="flex h-[22px] flex-1 items-center bg-[#032b41] pl-[11px]">
            <label htmlFor="zone-name" className="pr-1">Zone:</label>
            <select id="zone-name" className="appearance-none bg-transparent font-medium text-[#dac04c] outline-none">
              <option>Slice #5</option>
            </select>
            <UpDown className="ml-0.5 text-[#b4a85a]" />
            <label htmlFor="zone-file" className="w-[122px] pr-1 text-right">File:</label>
            <select id="zone-file" className="appearance-none bg-transparent text-[#dac04c] outline-none">
              <option>DENNY_WHITE..._128_Bmin.wav</option>
            </select>
            <Chevron className="ml-3 text-[#c9ab3a]" />
          </div>
          <div className="flex h-[22px] w-[158px] items-center gap-0.5 bg-[#032b41] pl-[5px]">
            <span className="pr-0.5">Play:</span>
            <button type="button" className="h-[18px] w-[59px] bg-[#443d23] font-medium text-[#e0b83a]">One Shot</button>
            <button type="button" className="h-[18px] w-[59px] bg-[#0b4064] text-[#a9c3d3]">Reverse</button>
          </div>
          <div className="flex h-[22px] w-[182px] items-center bg-[#032b41] pl-0.5 text-[#264a60]">
            <button type="button" aria-label="Flex" className="flex h-4 w-5 items-center justify-center bg-[#093a5b]">
              <svg viewBox="0 0 13 10" className="h-2.5 w-[13px]" fill="none" stroke="#6f93a9"><path d="M1 1v8M12 1v8M1 1.500 5.500 5 1 8.500M12 1.500 7.500 5 12 8.500M4 1l2.500 2.500L9 1M4 9l2.500-2.500L9 9" /></svg>
            </button>
            <button type="button" className="ml-1 h-[18px] w-[84px] bg-[#043048]">Follow Tempo</button>
            <span className="pl-1">Speed:</span>
            <span className="flex items-center gap-1 pl-1 text-[12px] text-[#948c4b]">1 <UpDown /></span>
          </div>
        </div>
        <div className="mt-[3px] bg-[#042e45] px-0.5 pb-px">
          <div className={FIELD_GRID}>
            <Field label="Sample Start:" value="115889" />
            <Field label="End:" value="155220" white />
            <Field label="Length:" value="39331" />
            <Field label="Fade In:" value="0" />
            <Field label="Fade Out:" value="264" />
          </div>
          <div className={FIELD_GRID + " border-t border-[#063a57]"}>
            <Field dim label="Loop Start:" value="115889" />
            <Field dim label="End:" value="155220" />
            <Field dim label="Length:" value="39331" />
            <Field dim label="Mode:" value="No Loop" picker />
            <Field dim label="Crossfade:" value="0" />
          </div>
        </div>
      </div>
    </section>
  );
}

function SamplerWindow() {
  return (
    <section
      aria-label="Sampler"
      className="absolute top-[31px] right-[213px] left-[255px] rounded-[9px] border-2 border-[#f2f2f2] bg-[#0c0c0c] shadow-[0_8px_24px_rgba(0,0,0,0.55)]"
    >
      <WindowHeader />
      <div className="flex bg-linear-to-b from-[#131c25] via-[#0d1217] via-10% to-[#0c0c0c] pl-4">
        <div className="min-w-0 flex-1">
          <Tabs />
          <div className="flex">
            <div className="min-w-0 flex-1">
              <section aria-label="Mapping" className="overflow-hidden rounded-sm">
                <MappingHeader />
                <MappingTable />
              </section>
              <ZonePanel />
            </div>
            <div className="ml-0.5 flex w-2 py-[3px]">
              <div className="-mb-2 w-2 rounded-full bg-[#37434f]" />
            </div>
          </div>
        </div>
        <span className="w-1" />
      </div>
      <footer className="relative flex h-[35px] items-center justify-center pt-0.5">
        <button type="button" aria-label="Disclosure" className="absolute bottom-2 left-2 text-[#9a9a9a]"><Triangle /></button>
        <p className="text-[17px] leading-5 text-[#8a8a8a]">Sampler</p>
      </footer>
    </section>
  );
}

function Pointer() {
  return (
    <svg aria-hidden="true" viewBox="0 0 12 18" className="absolute top-[246px] left-[402px] h-[18px] w-3">
      <path d="M1 1v13.500l3.200-3 2 4.800 2.300-1-2-4.600h4.300z" fill="#0a0a0a" stroke="#f4f4f4" strokeWidth="1.100" />
    </svg>
  );
}

export default function App() {
  return (
    <div className="relative flex min-h-screen flex-col bg-black px-7 font-[Inter,'Noto_Sans',sans-serif]">
      <Toolbar />
      <div className="flex flex-1 gap-px bg-[#3a3a3a] pb-0.5">
        <Inspector />
        <TracksArea />
      </div>
      <SamplerWindow />
      <Pointer />
    </div>
  );
}
